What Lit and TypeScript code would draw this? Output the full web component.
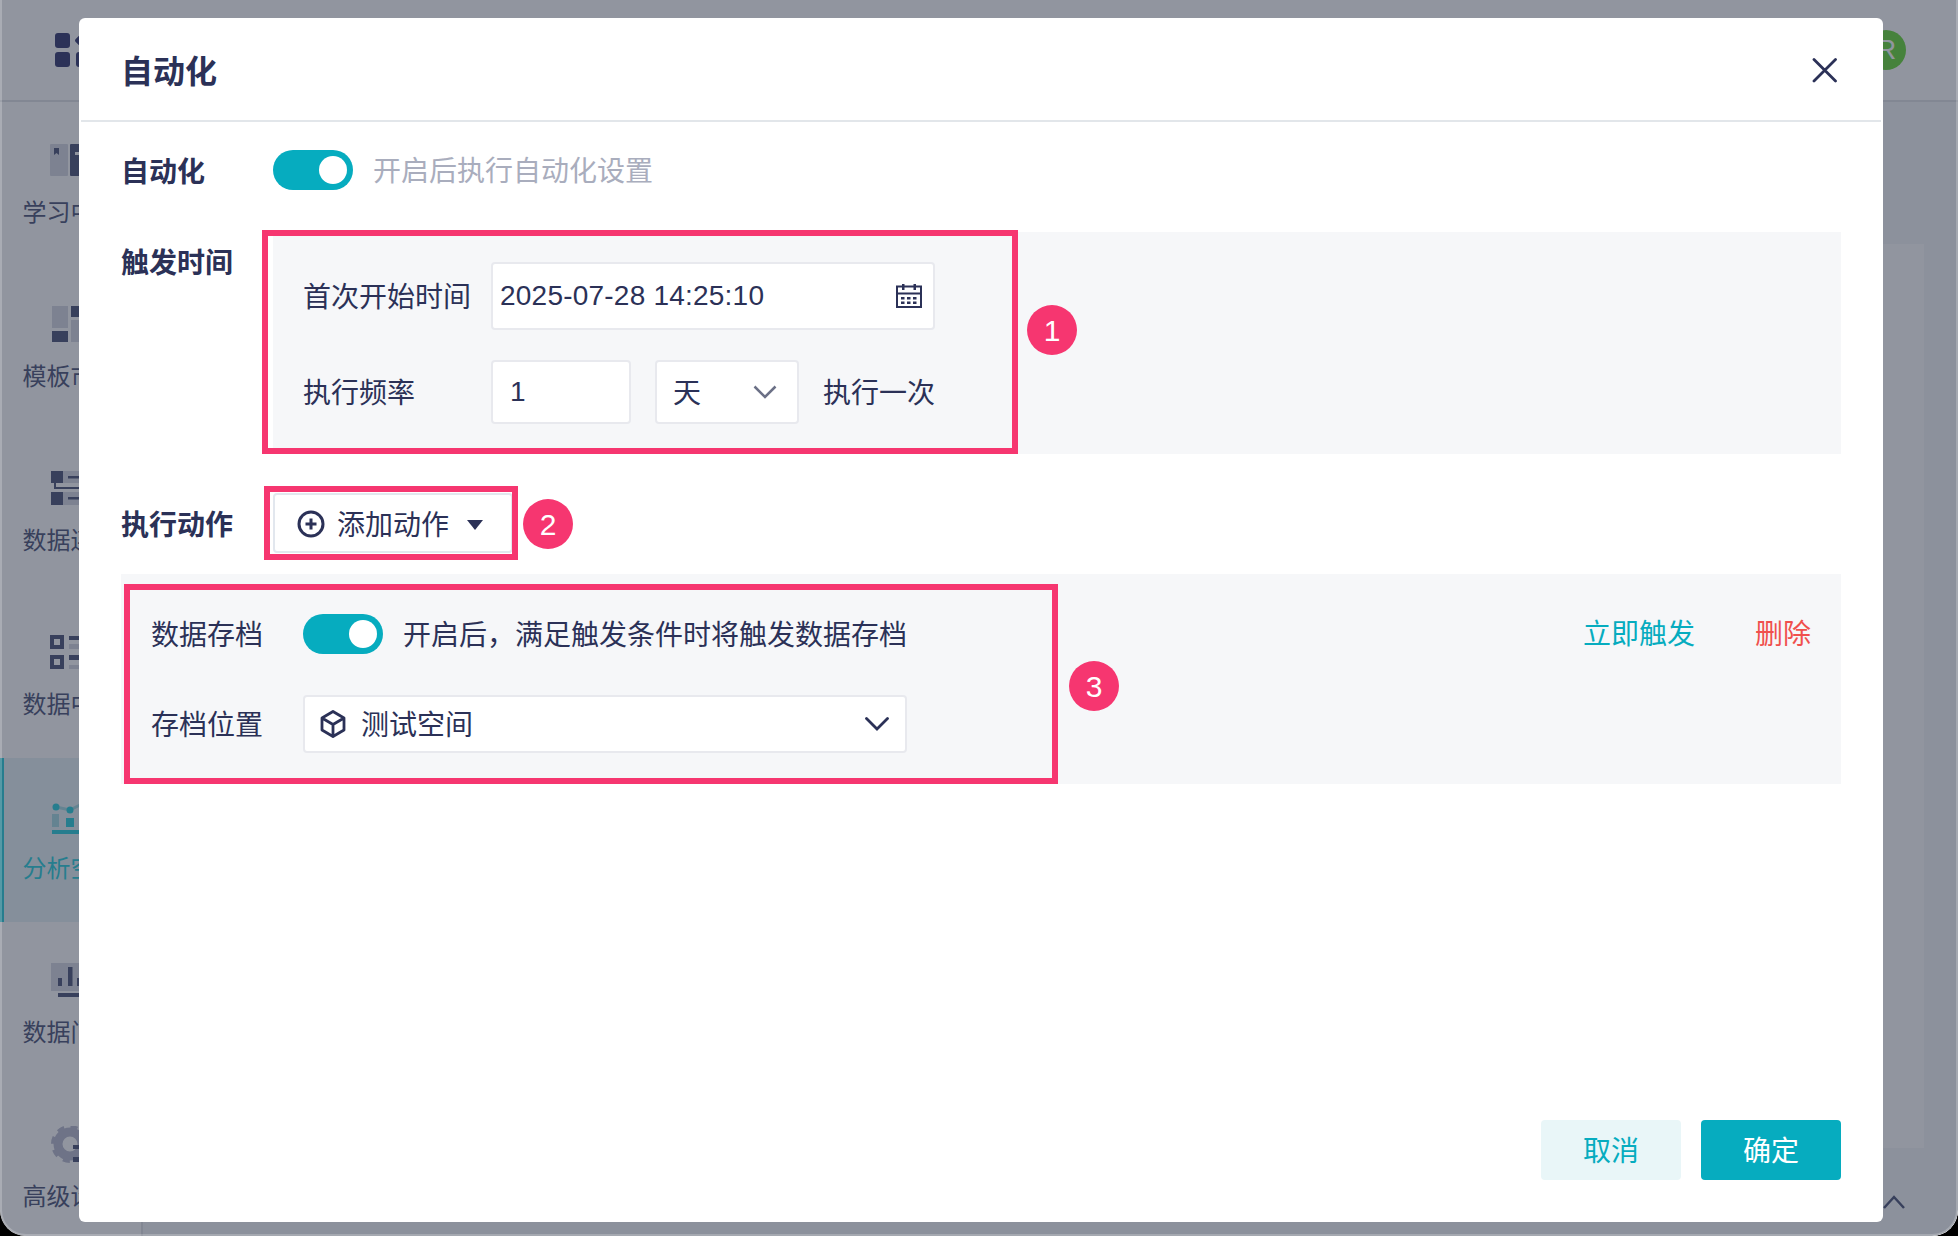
import { LitElement, html, css } from "lit";
import { customElement } from "lit/decorators.js";

const D = "#4d5578";
const G = "#d6d8e2";
const GEAR = "#b9bbce";
const T = "#29cfdc";
const T2 = "#a5dbe2";
const LOGO = "#353970";

const navItems = [
  {
    label: "学习中心",
    icon: html`<svg viewBox="0 0 42 38" width="42" height="38"><rect x="0" y="2" width="18" height="32" rx="1" fill="${G}"/><path d="M4 6h5v7l-2.500-2-2.500 2z" fill="${D}"/><rect x="20" y="2" width="22" height="32" rx="1" fill="${D}"/><rect x="25" y="10" width="12" height="3" fill="#fff"/></svg>`,
  },
  {
    label: "模板市场",
    icon: html`<svg viewBox="0 0 42 38" width="42" height="38"><rect x="2" y="0" width="16" height="22" fill="${G}"/><rect x="2" y="25" width="16" height="11" fill="${D}"/><rect x="21" y="0" width="21" height="11" fill="${D}"/><rect x="21" y="14" width="21" height="22" fill="${G}"/></svg>`,
  },
  {
    label: "数据连接",
    icon: html`<svg viewBox="0 0 42 38" width="42" height="38"><rect x="13" y="1" width="29" height="12" fill="${G}"/><rect x="13" y="22" width="29" height="13" fill="${G}"/><rect x="1" y="1" width="12" height="12" fill="${D}"/><rect x="1" y="22" width="12" height="13" fill="${D}"/><path d="M5 13v5h37" stroke="${D}" stroke-width="2" fill="none"/><rect x="18" y="6" width="24" height="2.500" fill="${D}"/><rect x="18" y="27" width="24" height="2.500" fill="${D}"/></svg>`,
  },
  {
    label: "数据中心",
    icon: html`<svg viewBox="0 0 42 38" width="42" height="38"><path fill-rule="evenodd" d="M0 1h14v14H0zM4 5v6h6V5z" fill="${D}"/><path fill-rule="evenodd" d="M0 21h14v14H0zM4 25v6h6V25z" fill="${D}"/><rect x="19" y="2" width="23" height="4" fill="${D}"/><rect x="19" y="10" width="23" height="5" fill="${G}"/><rect x="19" y="21" width="23" height="5" fill="${D}"/><rect x="19" y="31" width="23" height="4" fill="${G}"/></svg>`,
  },
  {
    label: "分析空间",
    active: true,
    icon: html`<svg viewBox="0 0 42 38" width="42" height="38"><path d="M6 9l14 3 14-7" stroke="${T2}" stroke-width="3" fill="none"/><circle cx="6" cy="9" r="3.500" fill="${T}"/><circle cx="20" cy="12" r="3.500" fill="${T}"/><rect x="2" y="16" width="7" height="13" fill="${T2}"/><rect x="16" y="20" width="8" height="9" fill="${T}"/><rect x="2" y="32" width="40" height="4" fill="${T}"/></svg>`,
  },
  {
    label: "数据门户",
    icon: html`<svg viewBox="0 0 42 38" width="42" height="38"><rect x="1" y="1" width="41" height="28" fill="${G}"/><rect x="8" y="16" width="4" height="8" fill="${D}"/><rect x="18" y="5" width="4.500" height="19" fill="${D}"/><rect x="27" y="16" width="4" height="8" fill="${D}"/><rect x="8" y="31" width="34" height="4" fill="${D}"/></svg>`,
  },
  {
    label: "高级设置",
    icon: html`<svg viewBox="0 0 42 38" width="42" height="38"><circle cx="20" cy="18" r="12" fill="none" stroke="${GEAR}" stroke-width="9"/><circle cx="20" cy="18" r="17" fill="none" stroke="${GEAR}" stroke-width="4" stroke-dasharray="7 6.350"/><rect x="23" y="19" width="19" height="4" fill="${D}"/><rect x="23" y="31" width="19" height="5" fill="${D}"/></svg>`,
  },
];

@customElement("app-root")
export class AppRoot extends LitElement {
  static styles = css`
    :host {
      display: block;
      position: relative;
      width: 1958px;
      height: 1236px;
      overflow: hidden;
      background: #000;
      font-family: "Liberation Sans", "Noto Sans CJK SC", sans-serif;
      color: #2b3157;
      font-size: 28px;
    }
    .window {
      position: relative;
      width: 100%;
      height: 100%;
      display: flex;
      flex-direction: column;
      background: #fff;
      border-radius: 0 0 26px 26px;
      overflow: hidden;
    }
    .topbar {
      flex: none;
      height: 100px;
      box-sizing: content-box;
      border-bottom: 2px solid #e1e3e6;
      display: flex;
      align-items: center;
      justify-content: space-between;
      padding: 0 52px 0 55px;
    }
    .avatar {
      width: 40px;
      height: 40px;
      border-radius: 50%;
      background: #68d838;
      color: #fff;
      font-size: 28px;
      display: flex;
      align-items: center;
      justify-content: center;
    }
    .logo { display: block; }
    .main { flex: 1; display: flex; min-height: 0; }
    .sidebar {
      flex: none;
      width: 141px;
      border-right: 2px solid #e1e3e6;
      display: flex;
      flex-direction: column;
    }
    .nav {
      flex: none;
      height: 164px;
      box-sizing: border-box;
      padding-top: 40px;
      display: flex;
      flex-direction: column;
      align-items: center;
      color: #4d5578;
      font-size: 24px;
      line-height: 32px;
    }
    .nav.active {
      background: #e7f3f6;
      color: #29cfdc;
      box-shadow: inset 4px 0 0 #29cfdc;
    }
    .nav svg { display: block; }
    .nav span { margin-top: 17px; white-space: nowrap; }
    .content {
      flex: 1;
      position: relative;
      background: #f5f7f8;
      padding: 142px 34px 88px 60px;
      display: flex;
    }
    .card { flex: 1; background: #fff; }
    .scroll-top { position: absolute; right: 52px; bottom: 26px; }
    .backdrop {
      position: absolute;
      inset: 0;
      background: rgba(35, 43, 64, 0.5);
      border: solid rgba(255, 255, 255, 0.22);
      border-width: 0 2px 2px 2px;
      border-radius: 0 0 26px 26px;
    }
    .modal {
      position: absolute;
      left: 79px;
      top: 18px;
      width: 1804px;
      height: 1204px;
      box-sizing: border-box;
      background: #fff;
      border-radius: 6px;
      display: flex;
      flex-direction: column;
    }
    .head {
      flex: none;
      margin: 0 2px;
      padding: 2px 44px 0 40px;
      box-sizing: content-box;
      height: 100px;
      border-bottom: 2px solid #e2e6ea;
      display: flex;
      align-items: center;
      justify-content: space-between;
    }
    .title { font-size: 32px; font-weight: 700; padding-bottom: 2px; }
    .x { display: block; }
    .body {
      flex: 1;
      display: flex;
      flex-direction: column;
      padding: 28px 42px 42px;
      min-height: 0;
    }
    .row { display: flex; align-items: center; }
    .cn { transform: translate(-1px, -1px); }
    .lab { flex: none; width: 152px; font-weight: 700; line-height: 28px; padding-top: 5px; }
    .toggle {
      flex: none;
      width: 80px;
      height: 40px;
      border-radius: 20px;
      background: #06acbf;
      display: flex;
      align-items: center;
      justify-content: flex-end;
      padding-right: 6px;
      box-sizing: border-box;
    }
    .toggle i { display: block; width: 28px; height: 28px; border-radius: 50%; background: #fff; }
    .hint { margin-left: 21px; color: #a9adbd; }
    .trigger-row { display: flex; margin-top: 42px; }
    .trigger-row .lab { padding-top: 18px; }
    .panel {
      flex: 1;
      height: 222px;
      box-sizing: border-box;
      background: #f6f7f9;
      padding: 30px 0 30px 31px;
      display: flex;
      flex-direction: column;
      gap: 30px;
    }
    .field-lab { flex: none; width: 187px; }
    .box {
      box-sizing: border-box;
      background: #fff;
      border: 2px solid #e8e9ee;
      border-radius: 4px;
      display: flex;
      align-items: center;
    }
    .date { width: 444px; height: 68px; padding: 0 11px 0 7px; justify-content: space-between; }
    .date span { letter-spacing: 0.22px; }
    .num { width: 140px; height: 64px; padding-left: 17px; }
    .sel { width: 144px; height: 64px; margin-left: 24px; padding: 0 20px 0 17px; justify-content: space-between; }
    .after { margin-left: 25px; }
    .action-row { margin-top: 39px; }
    .add {
      width: 240px;
      height: 60px;
      box-sizing: border-box;
      border: 2px solid #e2e7ee;
      border-radius: 4px;
      background: #fff;
      display: flex;
      align-items: center;
      padding-left: 22px;
    }
    .add .plus { margin-top: 2px; display: block; }
    .add span { margin-left: 12px; }
    .tri { margin: 4px 0 0 18px; display: block; }
    .action {
      margin-top: 21px;
      height: 210px;
      box-sizing: border-box;
      background: #f6f7f9;
      padding: 40px 30px 0 31px;
      display: flex;
      justify-content: space-between;
      align-items: flex-start;
    }
    .act-left { display: flex; flex-direction: column; gap: 41px; }
    .act-lab { flex: none; width: 151px; }
    .act-text { margin-left: 21px; }
    .space { width: 604px; height: 58px; padding: 0 16px 0 15px; }
    .space span { margin-left: 16px; flex: 1; }
    .links { display: flex; gap: 60px; height: 40px; align-items: center; padding-bottom: 4px; box-sizing: border-box; }
    .go { color: #06acbf; }
    .del { color: #f0504d; }
    .foot { margin-top: auto; display: flex; justify-content: flex-end; gap: 20px; }
    .btn {
      width: 140px;
      height: 60px;
      box-sizing: border-box;
      padding-bottom: 2px;
      border-radius: 4px;
      display: flex;
      align-items: center;
      justify-content: center;
    }
    .cancel { background: #e9f6f8; color: #06acbf; }
    .ok { background: #06acbf; color: #fff; }
    .mark { position: absolute; box-sizing: border-box; border: 6px solid #f63670; pointer-events: none; }
    .m1 { left: 183px; top: 212px; width: 756px; height: 224px; }
    .m2 { left: 185px; top: 468px; width: 254px; height: 74px; }
    .m3 { left: 45px; top: 566px; width: 934px; height: 200px; }
    .badge {
      position: absolute;
      width: 50px;
      height: 50px;
      box-sizing: border-box;
      padding-top: 1px;
      border-radius: 50%;
      background: #f63670;
      color: #fff;
      font-size: 30px;
      display: flex;
      align-items: center;
      justify-content: center;
    }
    .b1 { left: 948px; top: 287px; }
    .b2 { left: 444px; top: 481px; }
    .b3 { left: 990px; top: 643px; }
  `;

  render() {
    return html`
      <div class="window">
        <div class="topbar">
          <svg class="logo" width="40" height="34" viewBox="0 0 40 34">
            <rect x="0" y="0" width="15" height="15" rx="3" fill="${LOGO}" />
            <rect x="0" y="19" width="15" height="15" rx="3" fill="${LOGO}" />
            <rect x="21" y="19" width="15" height="15" rx="3" fill="${LOGO}" />
            <rect x="22" y="1" width="13" height="13" rx="2" fill="${LOGO}" transform="rotate(45 28.500 7.500)" />
          </svg>
          <div class="avatar">R</div>
        </div>
        <div class="main">
          <nav class="sidebar">
            ${navItems.map(
              (n) => html`<div class="nav ${n.active ? "active" : ""}">${n.icon}<span>${n.label}</span></div>`
            )}
          </nav>
          <div class="content">
            <div class="card"></div>
            <svg class="scroll-top" width="24" height="16" viewBox="0 0 24 16">
              <path d="M2 14L12 3l10 11" fill="none" stroke="#4d5578" stroke-width="2.500" />
            </svg>
          </div>
        </div>
        <div class="backdrop"></div>
        <div class="modal">
          <div class="head">
            <div class="title">自动化</div>
            <svg class="x" width="26" height="26" viewBox="0 0 26 26">
              <path d="M3 2.500L24.500 24M24.500 2.500L3 24" stroke="#2b3157" stroke-width="2.800" stroke-linecap="round" />
            </svg>
          </div>
          <div class="body">
            <div class="row">
              <div class="lab">自动化</div>
              <div class="toggle"><i></i></div>
              <div class="hint cn">开启后执行自动化设置</div>
            </div>
            <div class="trigger-row">
              <div class="lab">触发时间</div>
              <div class="panel">
                <div class="row">
                  <div class="field-lab cn">首次开始时间</div>
                  <div class="box date">
                    <span>2025-07-28 14:25:10</span>
                    <svg width="26" height="24" viewBox="0 0 26 24">
                      <rect x="1" y="2.500" width="24" height="20.500" fill="none" stroke="#2b3157" stroke-width="2" />
                      <rect x="1" y="8.500" width="24" height="2" fill="#2b3157" />
                      <rect x="6" y="0" width="2.500" height="6" fill="#2b3157" />
                      <rect x="17.500" y="0" width="2.500" height="6" fill="#2b3157" />
                      <path d="M5 13h3.500v2.500H5zM11 13h3.500v2.500H11zM17 13h3.500v2.500H17zM5 17.500h3.500V20H5zM11 17.500h3.500V20H11zM17 17.500h3.500V20H17z" fill="#2b3157" />
                    </svg>
                  </div>
                </div>
                <div class="row">
                  <div class="field-lab cn">执行频率</div>
                  <div class="box num">1</div>
                  <div class="box sel">
                    <span class="cn">天</span>
                    <svg width="24" height="14" viewBox="0 0 24 14">
                      <path d="M1.500 1.500L12 12 22.500 1.500" fill="none" stroke="#6b7086" stroke-width="2.500" />
                    </svg>
                  </div>
                  <div class="after cn">执行一次</div>
                </div>
              </div>
            </div>
            <div class="row action-row">
              <div class="lab">执行动作</div>
              <div class="add">
                <svg class="plus" width="28" height="28" viewBox="0 0 28 28">
                  <circle cx="14" cy="14" r="12" fill="none" stroke="#2b3157" stroke-width="3" />
                  <path d="M14 8.500v11M8.500 14h11" stroke="#2b3157" stroke-width="3" />
                </svg>
                <span>添加动作</span>
                <svg class="tri" width="16" height="10" viewBox="0 0 16 10"><path d="M0 0h16L8 10z" fill="#2b3157" /></svg>
              </div>
            </div>
            <div class="action">
              <div class="act-left">
                <div class="row">
                  <div class="act-lab cn">数据存档</div>
                  <div class="toggle"><i></i></div>
                  <div class="act-text cn">开启后，满足触发条件时将触发数据存档</div>
                </div>
                <div class="row">
                  <div class="act-lab cn">存档位置</div>
                  <div class="box space">
                    <svg width="26" height="28" viewBox="0 0 26 28">
                      <path d="M13 1.500L24 8v12L13 26.500 2 20V8zM2 8l11 6.500L24 8M13 14.500v12" fill="none" stroke="#2b3157" stroke-width="2.800" stroke-linejoin="round" />
                    </svg>
                    <span class="cn">测试空间</span>
                    <svg width="24" height="14" viewBox="0 0 24 14">
                      <path d="M1.500 1.500L12 12 22.500 1.500" fill="none" stroke="#2b3157" stroke-width="2.800" stroke-linecap="round" />
                    </svg>
                  </div>
                </div>
              </div>
              <div class="links">
                <div class="go">立即触发</div>
                <div class="del">删除</div>
              </div>
            </div>
            <div class="foot">
              <div class="btn cancel">取消</div>
              <div class="btn ok">确定</div>
            </div>
          </div>
          <div class="mark m1"></div>
          <div class="mark m2"></div>
          <div class="mark m3"></div>
          <div class="badge b1">1</div>
          <div class="badge b2">2</div>
          <div class="badge b3">3</div>
        </div>
      </div>
    `;
  }
}
